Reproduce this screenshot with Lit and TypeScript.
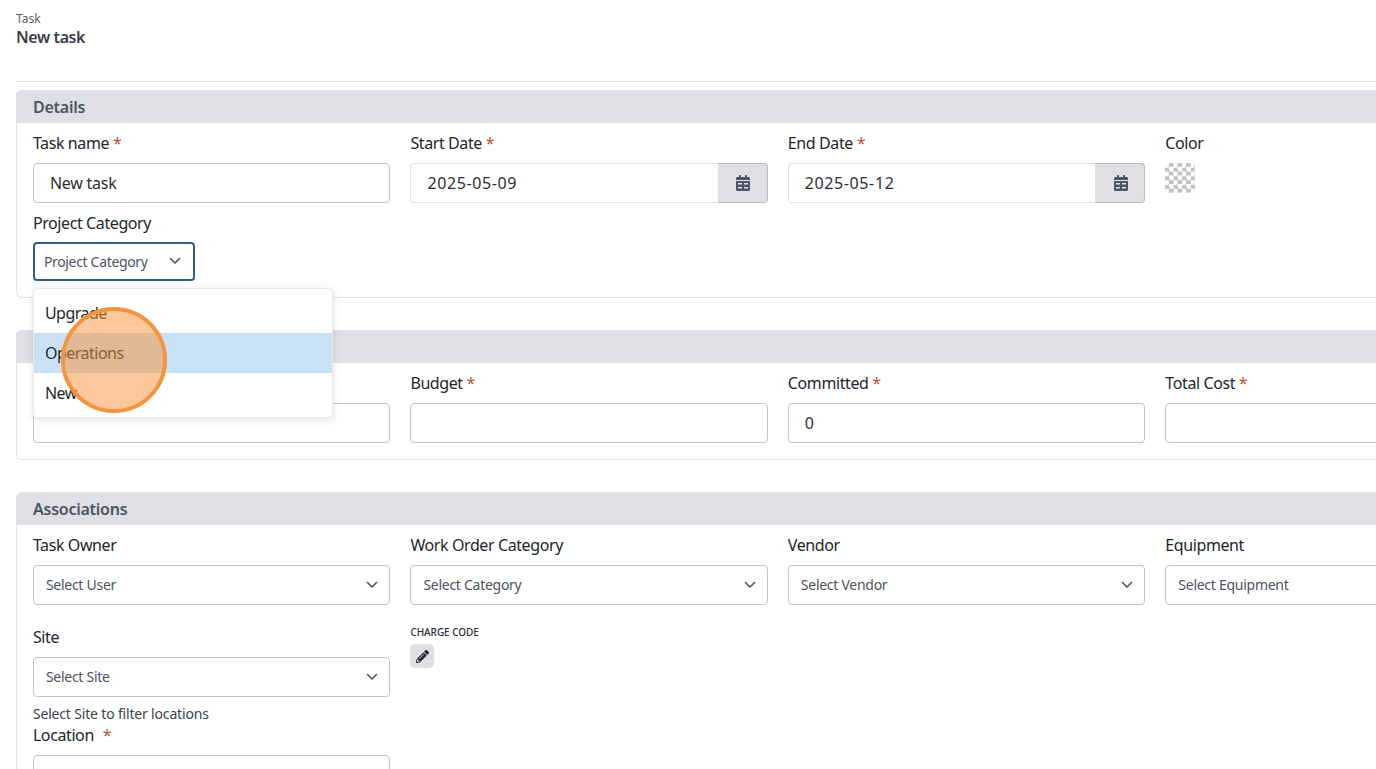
import { LitElement, html, css, svg } from "lit";
import { customElement } from "lit/decorators.js";

const calendarIcon = svg`<path d="M0 464c0 26.5 21.5 48 48 48h352c26.5 0 48-21.5 48-48V192H0v272zm64-208h128v48H64v-48zm192 0h128v48H256v-48zM64 384h128v48H64v-48zm192 0h128v48H256v-48zM400 64h-48V16c0-8.8-7.2-16-16-16h-32c-8.8 0-16 7.2-16 16v48H160V16c0-8.8-7.2-16-16-16h-32c-8.8 0-16 7.2-16 16v48H48C21.5 64 0 85.5 0 112v48h448v-48c0-26.5-21.5-48-48-48z" fill-rule="evenodd"/>`;

const pencilIcon = svg`<path d="M497.9 142.1l-46.1 46.1c-4.7 4.7-12.3 4.7-17 0l-111-111c-4.7-4.7-4.7-12.3 0-17l46.1-46.1c18.7-18.7 49.1-18.7 67.9 0l60.1 60.1c18.8 18.7 18.8 49.1 0 67.9zM284.2 99.8L21.6 362.4.4 483.9c-2.9 16.4 11.4 30.6 27.8 27.8l121.5-21.3 262.6-262.6c4.7-4.7 4.7-12.3 0-17l-111-111c-4.8-4.7-12.4-4.7-17.1 0zM124.1 339.9c-5.5-5.5-5.5-14.3 0-19.8l154-154c5.5-5.5 14.3-5.5 19.8 0s5.5 14.3 0 19.8l-154 154c-5.5 5.5-14.3 5.5-19.8 0zM88 424h48v36.3l-64.5 11.3-31.1-31.1L51.7 376H88v48z"/>`;

const chevron = html`<svg class="chev" viewBox="0 0 12 8"><path d="M1.5 1.5 6 6l4.5-4.5" fill="none" stroke="currentColor" stroke-width="1.6" stroke-linecap="round" stroke-linejoin="round"/></svg>`;

@customElement("app-root")
export class AppRoot extends LitElement {
  static styles = css`
    :host {
      display: block;
      position: relative;
      width: 1376px;
      height: 769px;
      overflow: hidden;
      background: #fff;
      font-family: "Noto Sans", "Liberation Sans", sans-serif;
      font-size: 16px;
      color: #22262b;
    }
    .page { width: 1900px; padding: 0 16px; box-sizing: border-box; }
    .top { padding-top: 11px; height: 70px; border-bottom: 1px solid #e2e3e6; margin-bottom: 8px; }
    .crumb { font-size: 12px; line-height: 15px; color: #565d66; }
    .title { font-size: 16px; line-height: 22px; font-weight: 600; color: #383e48; letter-spacing: -0.4px; }
    .card { border: 1px solid #e4e5e8; border-top: 0; border-radius: 6px 0 0 6px; margin-bottom: 32px; padding-bottom: 16px; }
    .card-head {
      height: 33px;
      line-height: 35px;
      background: #dfe0e4;
      padding-left: 17px;
      color: #4b5565;
      font-weight: 600;
      letter-spacing: -0.25px;
      border-radius: 6px 0 0 0;
      margin-left: -1px;
    }
    .row { display: grid; grid-template-columns: repeat(4, 357.4px); column-gap: 20.1px; padding: 8px 16px 0 15.9px; }
    .row.wide { padding-top: 20px; }
    .row.location { margin-top: -8px; }
    .field { position: relative; min-width: 0; }
    label { display: block; min-height: 24px; font-size: 16px; line-height: 24px; margin-bottom: 8px; color: #22262b; letter-spacing: -0.4px; }
    .req { color: #b5532d; margin-left: 0; }
    .req.far { margin-left: 5px; }
    .box {
      box-sizing: border-box;
      height: 40px;
      border: 1px solid #c2c4c8;
      border-radius: 4px;
      padding: 0 16px;
      display: flex;
      align-items: center;
      background: #fff;
      color: #2a2e33;
      letter-spacing: -0.25px;
    }
    .box.light { border-color: #e2e3e6; }
    .date { display: flex; height: 40px; }
    .date .box { flex: 1; border-radius: 4px 0 0 4px; border-right: 0; letter-spacing: 0.6px; }
    .date-btn {
      width: 50px;
      box-sizing: border-box;
      background: #dfe0e4;
      border: 1px solid #b9bbc0;
      border-left: 0;
      border-radius: 0 4px 4px 0;
      padding-left: 2px;
      display: flex;
      align-items: center;
      justify-content: center;
    }
    .date-btn svg { width: 14px; height: 16px; fill: #4b5565; }
    .swatch {
      width: 30px;
      height: 30px;
      background: repeating-conic-gradient(#c2c2c2 0 25%, #fff 0 50%) 0 0 / 8.6px 8.6px;
    }
    .select {
      box-sizing: border-box;
      height: 40px;
      border: 1px solid #c2c4c8;
      border-radius: 4px;
      padding: 0 11px 1px 12px;
      display: flex;
      align-items: center;
      justify-content: space-between;
      font-size: 14px;
      letter-spacing: -0.27px;
      color: #4b5361;
      background: #fff;
    }
    .chev { width: 12px; height: 8px; color: #4b5361; }
    .select.focus {
      width: 162px;
      height: 39px;
      margin-top: -1px;
      border: 2px solid #2f5f8a;
      padding: 0 12px 1px 9px;
      letter-spacing: -0.33px;
    }
    .menu {
      position: absolute;
      left: 0;
      top: 77px;
      width: 300px;
      box-sizing: border-box;
      padding: 4px 0;
      background: #fff;
      border: 1px solid #e8e9eb;
      border-radius: 4px;
      box-shadow: 0 2px 8px rgba(0, 0, 0, 0.12);
      z-index: 5;
    }
    .opt { height: 40px; line-height: 40px; padding-left: 11px; color: #22262b; letter-spacing: -0.5px; }
    .opt.active { background: #c9e1f5; }
    .help { font-size: 14px; line-height: 18px; margin-top: 8px; color: #3d434b; letter-spacing: -0.17px; }
    .charge { font-size: 10px; font-weight: 500; line-height: 14px; color: #2a2e33; margin-bottom: 5px; letter-spacing: -0.05px; }
    .edit {
      width: 24px;
      height: 24px;
      border-radius: 5px;
      background: #dfe0e4;
      display: flex;
      align-items: center;
      justify-content: center;
    }
    .edit svg { width: 13px; height: 13px; fill: #22262b; }
    .spot {
      position: absolute;
      left: 61px;
      top: 307px;
      width: 106px;
      height: 106px;
      box-sizing: border-box;
      border: 4px solid #f59440;
      border-radius: 50%;
      background: rgba(250, 145, 55, 0.5);
      z-index: 10;
    }
  `;

  private req(far = false) {
    return html`<span class="req ${far ? "far" : ""}">*</span>`;
  }

  private dateField(name: string, value: string) {
    return html`<div class="field">
      <label>${name} ${this.req()}</label>
      <div class="date">
        <div class="box light">${value}</div>
        <div class="date-btn"><svg viewBox="0 0 448 512">${calendarIcon}</svg></div>
      </div>
    </div>`;
  }

  private inputField(name: string, value = "") {
    return html`<div class="field">
      <label>${name} ${name ? this.req() : ""}</label>
      <div class="box">${value}</div>
    </div>`;
  }

  private selectField(name: string, placeholder: string) {
    return html`<div class="field">
      <label>${name}</label>
      <div class="select">${placeholder}${chevron}</div>
    </div>`;
  }

  render() {
    return html`
      <div class="page">
        <div class="top">
          <div class="crumb">Task</div>
          <div class="title">New task</div>
        </div>

        <section class="card">
          <div class="card-head">Details</div>
          <div class="row">
            ${this.inputField("Task name", "New task")}
            ${this.dateField("Start Date", "2025-05-09")}
            ${this.dateField("End Date", "2025-05-12")}
            <div class="field">
              <label>Color</label>
              <div class="swatch"></div>
            </div>
          </div>
          <div class="row">
            <div class="field">
              <label>Project Category</label>
              <div class="select focus">Project Category ${chevron}</div>
              <div class="menu">
                <div class="opt">Upgrade</div>
                <div class="opt active">Operations</div>
                <div class="opt">New</div>
              </div>
            </div>
          </div>
        </section>

        <section class="card">
          <div class="card-head"></div>
          <div class="row">
            ${this.inputField("")}
            ${this.inputField("Budget")}
            ${this.inputField("Committed", "0")}
            ${this.inputField("Total Cost")}
          </div>
        </section>

        <section class="card">
          <div class="card-head">Associations</div>
          <div class="row">
            ${this.selectField("Task Owner", "Select User")}
            ${this.selectField("Work Order Category", "Select Category")}
            ${this.selectField("Vendor", "Select Vendor")}
            ${this.selectField("Equipment", "Select Equipment")}
          </div>
          <div class="row wide">
            <div class="field">
              <label>Site</label>
              <div class="select">Select Site${chevron}</div>
              <div class="help">Select Site to filter locations</div>
            </div>
            <div class="field">
              <div class="charge">CHARGE CODE</div>
              <div class="edit"><svg viewBox="0 0 512 512">${pencilIcon}</svg></div>
            </div>
          </div>
          <div class="row location">
            <div class="field">
              <label>Location ${this.req(true)}</label>
              <div class="box"></div>
            </div>
          </div>
        </section>
      </div>
      <div class="spot"></div>
    `;
  }
}
